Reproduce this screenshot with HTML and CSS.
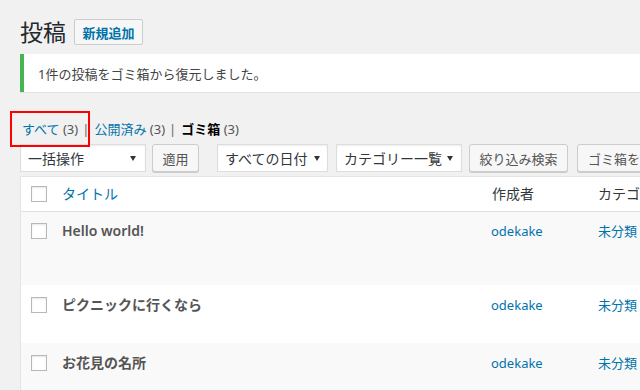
FILE: index.html
```html
<!DOCTYPE html>
<html lang="ja">
<head>
<meta charset="utf-8">
<title>投稿</title>
<link rel="stylesheet" href="styles.css">
</head>
<body>
<div class="wrap">
  <div class="page-head">
    <h1 class="page-title">投稿</h1>
    <a class="btn-add">新規追加</a>
  </div>

  <div class="notice">1件の投稿をゴミ箱から復元しました。</div>

  <ul class="subsubsub">
    <li><a class="sub-link">すべて</a> <span class="count">(3)</span></li>
    <li class="sep">|</li>
    <li><a class="sub-link">公開済み</a> <span class="count">(3)</span></li>
    <li class="sep">|</li>
    <li><a class="sub-link current">ゴミ箱</a> <span class="count">(3)</span></li>
  </ul>

  <div class="tablenav">
    <div class="select sel-bulk"><span>一括操作</span><svg class="arrow" width="6" height="5" viewBox="0 0 6 5"><polygon points="0,0 6,0 3,5" fill="#333"/></svg></div>
    <button class="btn btn-apply">適用</button>
    <div class="select sel-date"><span>すべての日付</span><svg class="arrow" width="6" height="5" viewBox="0 0 6 5"><polygon points="0,0 6,0 3,5" fill="#333"/></svg></div>
    <div class="select sel-cat"><span>カテゴリー一覧</span><svg class="arrow" width="6" height="5" viewBox="0 0 6 5"><polygon points="0,0 6,0 3,5" fill="#333"/></svg></div>
    <button class="btn btn-filter">絞り込み検索</button>
    <button class="btn btn-empty">ゴミ箱を空にする</button>
  </div>

  <div class="table">
    <div class="row head">
      <div class="cell c-check"><span class="checkbox"></span></div>
      <div class="cell c-title"><a class="th-link">タイトル</a></div>
      <div class="cell c-author">作成者</div>
      <div class="cell c-cat">カテゴリー</div>
    </div>
    <div class="row alt r1">
      <div class="cell c-check"><span class="checkbox"></span></div>
      <div class="cell c-title"><strong class="post-title">Hello world!</strong></div>
      <div class="cell c-author"><a class="link">odekake</a></div>
      <div class="cell c-cat"><a class="link">未分類</a></div>
    </div>
    <div class="row r2">
      <div class="cell c-check"><span class="checkbox"></span></div>
      <div class="cell c-title"><strong class="post-title">ピクニックに行くなら</strong></div>
      <div class="cell c-author"><a class="link">odekake</a></div>
      <div class="cell c-cat"><a class="link">未分類</a></div>
    </div>
    <div class="row alt r3">
      <div class="cell c-check"><span class="checkbox"></span></div>
      <div class="cell c-title"><strong class="post-title">お花見の名所</strong></div>
      <div class="cell c-author"><a class="link">odekake</a></div>
      <div class="cell c-cat"><a class="link">未分類</a></div>
    </div>
  </div>

  <div class="highlight"></div>
</div>
</body>
</html>
```

FILE: styles.css
```css
html, body {
  margin: 0;
  padding: 0;
}
body {
  background: #f1f1f1;
  font-family: "Noto Sans", "Noto Sans CJK JP", sans-serif;
  font-size: 13px;
  color: #444;
  width: 640px;
  height: 390px;
  overflow: hidden;
}
.wrap {
  position: relative;
  padding-left: 20px;
  width: 760px;
}
.page-head {
  display: flex;
  align-items: center;
  gap: 8px;
  padding-top: 19px;
  height: 26px;
}
.page-title {
  margin: 0;
  font-size: 23px;
  font-weight: 400;
  line-height: 26px;
  color: #23282d;
}
.btn-add {
  box-sizing: border-box;
  height: 26px;
  width: 69px;
  display: flex;
  align-items: center;
  justify-content: center;
  font-size: 13px;
  font-weight: 600;
  color: #0073aa;
  background: #f7f7f7;
  border: 1px solid #ccc;
  border-radius: 2px;
}
.notice {
  margin-top: 9px;
  height: 38px;
  display: flex;
  align-items: center;
  box-sizing: border-box;
  padding-left: 14px;
  background: #fff;
  border-left: 4px solid #46b450;
  box-shadow: 0 1px 1px rgba(0,0,0,0.06);
  color: #444;
  font-size: 13px;
}
.subsubsub {
  list-style: none;
  margin: 27px 0 0 2px;
  padding: 0;
  display: flex;
  align-items: center;
  height: 20px;
  line-height: 20px;
  font-size: 13px;
  color: #555;
}
.subsubsub .sep {
  margin: 0 5px 0 4px;
  color: #666;
}
.sub-link {
  color: #0073aa;
}
.sub-link.current {
  color: #000;
  font-weight: 600;
}
.count {
  color: #555;
}
.tablenav {
  margin-top: 5px;
  display: flex;
  align-items: stretch;
  height: 28px;
}
.select {
  box-sizing: border-box;
  height: 28px;
  display: flex;
  align-items: center;
  justify-content: space-between;
  padding: 0 8px 0 7px;
  background: #fff;
  border: 1px solid #ddd;
  box-shadow: inset 0 1px 2px rgba(0,0,0,0.07);
  font-size: 14px;
  color: #32373c;
}
.sel-bulk { width: 126px; padding-right: 9px; }
.sel-date { width: 111px; margin-left: 18px; padding-right: 7px; }
.sel-cat { width: 126px; margin-left: 8px; }
.arrow { flex: none; }
.btn {
  box-sizing: border-box;
  height: 28px;
  padding: 0;
  font-family: inherit;
  font-size: 13px;
  color: #555;
  background: #f7f7f7;
  border: 1px solid #ccc;
  border-radius: 3px;
  box-shadow: 0 1px 0 #ccc;
  white-space: nowrap;
}
.btn-apply { width: 47px; margin-left: 6px; }
.btn-filter { width: 99px; margin-left: 7px; }
.btn-empty { width: 130px; margin-left: 9px; text-align: left; padding-left: 10px; }
.table {
  margin-top: 4px;
  border: 1px solid #e5e5e5;
  box-shadow: 0 1px 1px rgba(0,0,0,0.04);
  background: #fff;
  width: 720px;
}
.row {
  display: grid;
  grid-template-columns: 33px 429px 107px 1fr;
  background: #fff;
}
.row.alt { background: #f9f9f9; }
.row.head {
  height: 34px;
  align-items: center;
  border-bottom: 1px solid #e1e1e1;
  font-size: 14px;
  color: #32373c;
  line-height: 20px;
}
.row.r1 { height: 73px; }
.row.r2 { height: 58px; }
.row.r3 { height: 58px; }
.row.r1, .row.r2, .row.r3 {
  align-items: start;
  line-height: 20px;
}
.r1 .cell, .r2 .cell, .r3 .cell { padding-top: 9px; }
.r2 .cell, .r3 .cell { padding-top: 10px; }
.c-check { padding-left: 10px; }
.c-title, .c-author, .c-cat { padding-left: 8px; }
.head .c-author { padding-left: 9px; }
.r1 .c-check .checkbox, .r2 .c-check .checkbox, .r3 .c-check .checkbox { margin-top: 2px; }
.head .c-check { display: flex; align-items: center; }
.checkbox {
  display: block;
  box-sizing: border-box;
  width: 16px;
  height: 16px;
  border: 1px solid #b4b9be;
  background: #fff;
  box-shadow: inset 0 1px 2px rgba(0,0,0,0.1);
}
.th-link { color: #0073aa; }
.post-title {
  font-size: 14px;
  font-weight: 600;
  color: #555;
}
.link {
  color: #0073aa;
  font-size: 13px;
}
.highlight {
  position: absolute;
  left: 10px;
  top: 111px;
  width: 80px;
  height: 36px;
  box-sizing: border-box;
  border: 2px solid #f00;
}
```
